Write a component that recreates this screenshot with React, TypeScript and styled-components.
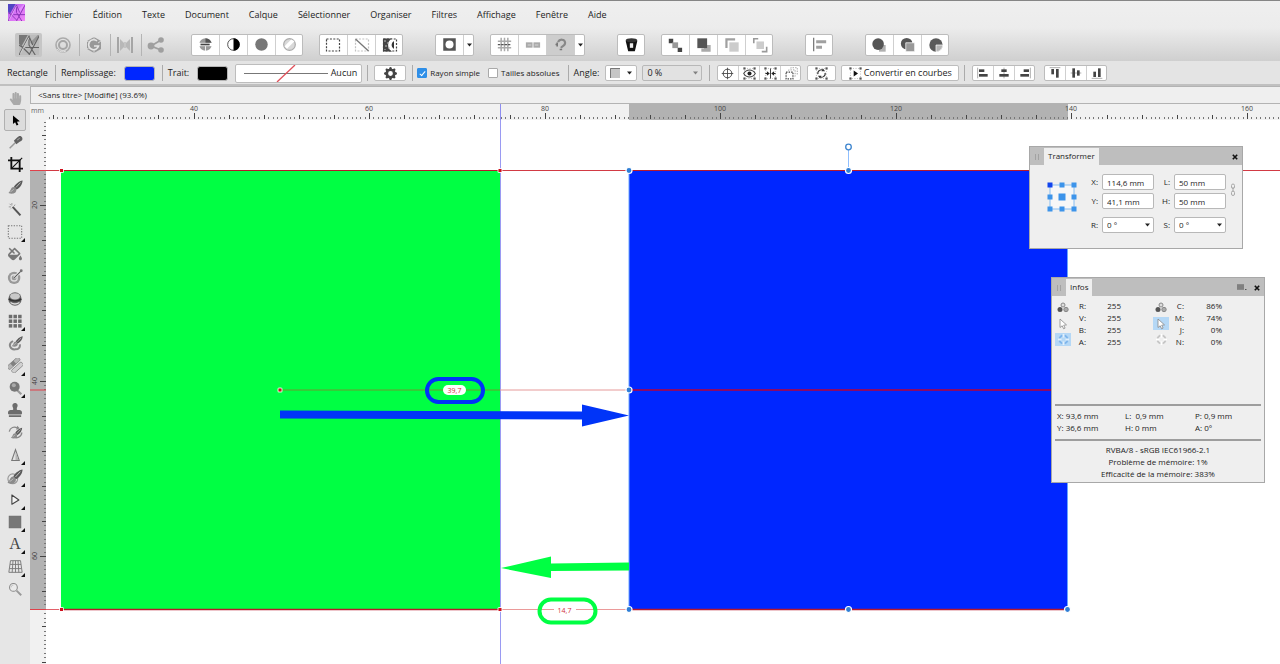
import React, { useEffect, useRef, useState } from "react";
import styled, { createGlobalStyle, css } from "styled-components";
import { FaFillDrip, FaHandPaper, FaStamp } from "react-icons/fa";
import { BsGearFill } from "react-icons/bs";

const GlobalStyle = createGlobalStyle`
  *, *::before, *::after { box-sizing: border-box; }
  body {
    margin: 0;
    background: #e6e6e6;
    color: #1c1c1c;
    font-family: "Open Sans", "Noto Sans", sans-serif;
    font-size: 9px;
    line-height: 12px;
  }
  button, input, select { font: inherit; color: inherit; margin: 0; padding: 0; }
  svg { display: block; flex: none; }
`;

/* ---------- shell ---------- */

const Window = styled.div`
  display: flex;
  flex-direction: column;
  min-height: 100vh;
  border-top: 1px solid #858585;
  overflow: hidden;
`;

const TopArea = styled.header`
  background: linear-gradient(#efefef, #ececec 45%, #cfcfcf);
`;

const MenuBar = styled.nav`
  display: flex;
  align-items: center;
  height: 27px;
  padding-left: 8px;
`;

const AppIcon = styled.span`
  margin: -4px 10px 0 0;
`;

const MenuItem = styled.button`
  border: 0;
  background: none;
  padding: 0 10px;
  white-space: nowrap;
`;

const MainToolbar = styled.div`
  display: flex;
  align-items: center;
  height: 33px;
  padding-left: 15px;
`;

const Personas = styled.div`
  display: flex;
  width: 176px;
`;

const PersonaButton = styled.button<{ $active?: boolean }>`
  display: grid;
  place-items: center;
  width: ${(p) => (p.$active ? 27 : 30)}px;
  margin-right: ${(p) => (p.$active ? 6 : 1)}px;
  height: 24px;
  border: 0;
  border-radius: 2px;
  background: ${(p) => (p.$active ? "#c6c6c6" : "none")};
  & + & { position: relative; }
  & + &::before {
    content: "";
    position: absolute;
    left: 0;
    top: 1px;
    width: 1px;
    height: 22px;
    background: #b4b4b4;
  }
`;

const ButtonGroup = styled.div<{ $gap?: number }>`
  display: flex;
  margin-left: ${(p) => p.$gap ?? 0}px;
  border: 1px solid #bcbcbc;
  border-radius: 2px;
  background: #fff;
`;

const GroupButton = styled.button<{ $small?: boolean; $pressed?: boolean; $narrow?: boolean }>`
  display: grid;
  place-items: center;
  flex: none;
  width: ${(p) => (p.$narrow ? 11 : p.$small ? 21 : 28)}px;
  height: ${(p) => (p.$small ? 14 : 20)}px;
  border: 0;
  background: ${(p) => (p.$pressed ? "#cdcdcd" : "none")};
  & + & { border-left: 1px solid #cfcfcf; }
  &:first-child { margin-left: -1px; }
  &:last-child { margin-right: -1px; }
`;

const ContextBar = styled.div`
  display: flex;
  align-items: center;
  height: 25px;
  padding: 1px 0 0 7px;
  background: #e4e4e4;
  border-bottom: 2px solid #c0c0c0;
  white-space: nowrap;
`;

const Divider = styled.span<{ $before?: number; $after?: number }>`
  flex: none;
  width: 1px;
  height: 16px;
  margin: 0 ${(p) => p.$after ?? 5}px 0 ${(p) => p.$before ?? 7}px;
  background: #ababab;
`;

const Swatch = styled.button<{ $color: string }>`
  width: 31px;
  height: 15px;
  margin-left: 8px;
  border: 1px solid #b5b5b5;
  border-radius: 3px;
  background: ${(p) => p.$color};
`;

const StrokeBox = styled.button`
  display: flex;
  align-items: center;
  justify-content: space-between;
  width: 127px;
  height: 19px;
  margin-left: 7px;
  padding: 0 4px 0 8px;
  border: 1px solid #bdbdbd;
  border-radius: 2px;
  background: #fff;
`;

const PlainButton = styled.button<{ $width: number; $left?: number }>`
  display: flex;
  align-items: center;
  justify-content: center;
  gap: 2px;
  flex: none;
  width: ${(p) => p.$width}px;
  height: 16px;
  margin-left: ${(p) => p.$left ?? 0}px;
  border: 1px solid #bdbdbd;
  border-radius: 2px;
  background: #fff;
`;

const CheckLabel = styled.label`
  display: flex;
  align-items: center;
  gap: 3px;
  margin-right: 8px;
  font-size: 8px;
`;

const Check = styled.input`
  appearance: none;
  display: grid;
  place-items: center;
  width: 10px;
  height: 10px;
  border: 1px solid #a9a9a9;
  border-radius: 1px;
  background: #fff;
  &:checked { background: #2f8fe8; border-color: #2f8fe8; }
  &:checked::after {
    content: "";
    width: 3px;
    height: 6px;
    margin-top: -1px;
    border: solid #fff;
    border-width: 0 1px 1px 0;
    transform: rotate(40deg);
  }
`;

const SelectWrap = styled.span<{ $width: number; $left?: number; $dim?: boolean }>`
  position: relative;
  display: inline-flex;
  flex: none;
  width: ${(p) => p.$width}px;
  height: 16px;
  margin-left: ${(p) => p.$left ?? 0}px;
  border: 1px solid #b8b8b8;
  border-radius: 2px;
  background: ${(p) => (p.$dim ? "#e2e2e2" : "#fff")};
  > svg {
    position: absolute;
    right: 3px;
    top: 5px;
    pointer-events: none;
    ${(p) => p.$dim && css`opacity: 0.5;`}
  }
`;

const Select = styled.select`
  appearance: none;
  width: 100%;
  height: 100%;
  padding: 0 4px;
  border: 0;
  background: none;
  line-height: 12px;
`;

const Body = styled.div`
  display: flex;
  flex: 1;
`;

const ToolColumn = styled.div`
  display: flex;
  flex-direction: column;
  justify-content: space-between;
  align-items: center;
  flex: none;
  width: 30px;
  height: 514px;
  padding-top: 1px;
`;

const ToolButton = styled.button<{ $active?: boolean }>`
  position: relative;
  display: grid;
  place-items: center;
  width: 22px;
  height: 22px;
  border: 1px solid ${(p) => (p.$active ? "#b0b0b0" : "transparent")};
  border-radius: 2px;
  background: ${(p) => (p.$active ? "#dcdcdc" : "none")};
`;

const Flyout = styled.span`
  position: absolute;
  right: 0;
  bottom: 0;
  border: solid transparent;
  border-width: 0 0 4px 4px;
  border-bottom-color: #111;
`;

const Workspace = styled.main`
  display: grid;
  grid-template: 18px 16px 1fr / 16px minmax(0, 1fr);
  flex: 1;
  min-width: 0;
`;

const DocumentTab = styled.div`
  grid-column: 1 / -1;
  padding: 2px 7px;
  border: 1px solid #b3b3b3;
  border-right: 0;
  background: #efefef;
  font-size: 8px;
`;

const Unit = styled.div`
  background: #f1f1f1;
  color: #666;
  font-size: 7px;
  line-height: 14px;
  padding-left: 1px;
`;

const RulerH = styled.svg`
  width: 100%;
  height: 16px;
  background: #f1f1f1;
`;

const RulerV = styled.svg`
  width: 16px;
  height: 100%;
  background: #f1f1f1;
`;

const Canvas = styled.section`
  position: relative;
  background: #fff;
  overflow: hidden;
`;

const Artwork = styled.svg`
  position: absolute;
  inset: 0;
  width: 100%;
  height: 100%;
`;

/* ---------- floating panels ---------- */

const Panel = styled.aside<{ $x: number; $y: number }>`
  position: absolute;
  left: ${(p) => p.$x}px;
  top: ${(p) => p.$y}px;
  width: 214px;
  border: 1px solid #a8a8a8;
  background: #efefef;
  font-size: 8px;
  line-height: 12px;
`;

const PanelHead = styled.div`
  display: flex;
  align-items: center;
  height: 18px;
  padding: 1px 4px 0 5px;
  background: #bebebe;
`;

const PanelTab = styled.h2`
  align-self: stretch;
  margin: 0 auto 0 5px;
  padding: 2px 4px;
  background: #efefef;
  font-size: 8px;
  font-weight: 400;
`;

const IconButton = styled.button`
  border: 0;
  background: none;
  margin-left: 7px;
`;

const TransformBody = styled.div`
  display: flex;
  align-items: flex-start;
  padding: 9px 6px 15px 17px;
`;

const AnchorBox = styled.div`
  margin-top: 8px;
  margin-right: 10px;
`;

const Fields = styled.div`
  display: grid;
  grid-template-columns: 11px 52px 12px 52px;
  gap: 3px 4px;
  align-items: center;
`;

const FieldLabel = styled.label`
  text-align: right;
  justify-self: end;
`;

const TextField = styled.input`
  width: 100%;
  height: 16px;
  padding: 0 4px;
  border: 1px solid #b8b8b8;
  border-radius: 2px;
  background: #fff;
`;

const FieldGap = styled.span`
  grid-column: 1 / -1;
  height: 2px;
`;

const LinkIcon = styled.div`
  margin: 9px 0 0 4px;
`;

const InfoBody = styled.div`
  padding: 4px 3px 2px;
`;

const InfoColumns = styled.div`
  display: flex;
  height: 104px;
`;

const InfoModes = styled.div<{ $left?: number }>`
  display: flex;
  flex-direction: column;
  gap: 3px;
  margin: 1px 0 0 ${(p) => p.$left ?? 0}px;
`;

const ModeButton = styled.button<{ $active?: boolean }>`
  display: grid;
  place-items: center;
  width: 16px;
  height: 13px;
  border: 0;
  background: ${(p) => (p.$active ? "#b5d8f6" : "none")};
`;

const Values = styled.table<{ $width: number }>`
  align-self: flex-start;
  width: ${(p) => p.$width}px;
  border-collapse: collapse;
  text-align: right;
  th, td { padding: 0; font-weight: 400; }
  th { width: 15px; text-align: right; }
`;

const Coordinates = styled.div`
  display: grid;
  grid-template-columns: 68px 70px 1fr;
  padding: 4px 2px 5px;
  border-top: 2px solid #9d9d9d;
  border-bottom: 2px solid #9d9d9d;
  white-space: pre;
`;

const Status = styled.p`
  margin: 3px 0 0;
  text-align: center;
`;

/* ---------- icons ---------- */

const Caret = () => (
  <svg width="5" height="4" viewBox="0 0 5 4"><path d="M0 0.5h5L2.5 3.5z" fill="#222" /></svg>
);

const Icon = ({ s = 18, children }: { s?: number; children: React.ReactNode }) => (
  <svg width={s} height={s} viewBox="0 0 18 18" fill="none" stroke="none">{children}</svg>
);

const anchors = [0, 1, 2].flatMap((r) => [0, 1, 2].map((c) => [c, r])).filter(([c, r]) => c !== 1 || r !== 1);

const CornerDots = () => (
  <>
    <rect x="2" y="2" width="14" height="14" stroke="#aaa" strokeWidth="1" strokeDasharray="1.5 2" />
    {[[2, 2], [16, 2], [2, 16], [16, 16]].map(([x, y]) => (
      <rect key={`${x}-${y}`} x={x - 1.5} y={y - 1.5} width="3" height="3" fill="#555" />
    ))}
  </>
);

const Logo = ({ size, mono }: { size: number; mono?: boolean }) => (
  <svg width={size} height={size} viewBox="0 0 16 16">
    <defs>
      <linearGradient id="brand" x1="0" y1="0" x2="1" y2="1">
        <stop offset="0" stopColor="#8a58e6" />
        <stop offset="0.4" stopColor="#d070f4" />
        <stop offset="1" stopColor="#f285f6" />
      </linearGradient>
    </defs>
    <rect width="16" height="16" fill={mono ? "#bcbcbc" : "url(#brand)"} />
    <path d="M0 0h7L2 9 0 7z" fill={mono ? "#777" : "#5145c4"} />
    <path d="M9 6l6-6h1v1l-5 7z" fill={mono ? "#959595" : "#e58cff"} />
    <path d="M0 16L8 1l3 7M2 9l6 6M5 10h11M8 16l8-15M8 1v7l5 8M0 8l3 2" stroke={mono ? "#636363" : "#8a35b8"} strokeWidth="0.9" fill="none" />
    <path d="M1 15L8 2" stroke={mono ? "#e2e2e2" : "#f7c8ff"} strokeWidth="0.6" />
  </svg>
);

type Btn = [string, React.ReactNode];

const personas: Btn[] = [
  ["Fluidité", <Icon key="a"><circle cx="9" cy="9" r="7" stroke="#aaa" strokeWidth="1.6" /><circle cx="9" cy="9" r="4" stroke="#a5a5a5" strokeWidth="2" /><path d="M3 13a7 7 0 0 0 9 2" stroke="#ddd" /></Icon>],
  ["Développer", <Icon key="b"><path d="M9 1l7 4v8l-7 4-7-4V5z" fill="#999" /><path d="M12 5a5 5 0 1 0 1.500 5H9" stroke="#e6e6e6" strokeWidth="1.600" /><path d="M9 1v3M16 5l-3 2M9 17v-3M2 13l3-2M2 5l3 2" stroke="#ddd" strokeWidth="0.9" /></Icon>],
  ["Mappage tonal", <Icon key="c"><path d="M2 1v16M16 1v16" stroke="#a5a5a5" strokeWidth="2" /><path d="M4 3l4 4v4l-4 4zM14 3l-4 4v4l4 4z" fill="#b8b8b8" /><path d="M9 6v6" stroke="#aaa" strokeWidth="1" /></Icon>],
  ["Exporter", <Icon key="d"><path d="M14 4L4 10l10 4" stroke="#9f9f9f" strokeWidth="1.8" /><circle cx="4" cy="10" r="3.4" fill="#9f9f9f" /><circle cx="14" cy="4" r="2.8" fill="#9f9f9f" /><circle cx="14" cy="14" r="2.8" fill="#9f9f9f" /></Icon>],
];

const MarqueeBox = ({ color = "#444" }: { color?: string }) => (
  <rect x="2.5" y="3" width="13" height="12" stroke={color} strokeWidth="1.2" strokeDasharray="2 1.4" />
);

const adjustments: Btn[] = [
  ["Niveaux automatiques", <Icon key="1" s={15}><circle cx="9" cy="9" r="7.500" fill="#999" /><path d="M9 1.500a7.500 7.500 0 0 1 7.500 7.500H9z" fill="#555" /><rect x="1" y="7" width="16" height="4" fill="#fff" /><rect x="3" y="8" width="11" height="2" fill="#444" /><path d="M9 11v6" stroke="#fff" /></Icon>],
  ["Contraste automatique", <Icon key="2" s={15}><circle cx="9" cy="9" r="7" stroke="#333" fill="#fff" /><path d="M9 1.500a7.500 7.500 0 0 1 0 15z" fill="#000" /></Icon>],
  ["Couleurs automatiques", <Icon key="3" s={15}><circle cx="9" cy="9" r="7.500" fill="#777" /></Icon>],
  ["Balance des blancs", <Icon key="4" s={15}><circle cx="9" cy="9" r="7" stroke="#aaa" strokeWidth="1.4" fill="#d9d9d9" /><path d="M3 11l8-8 4 2-9 9z" fill="#fff" /></Icon>],
];

const selections: Btn[] = [
  ["Tout sélectionner", <Icon key="1" s={18}><MarqueeBox /></Icon>],
  ["Désélectionner", <Icon key="2" s={18}><MarqueeBox color="#c2c2c2" /><path d="M2.500 3l13 12" stroke="#777" strokeWidth="1.3" /></Icon>],
  ["Inverser la sélection", <Icon key="3" s={18}><MarqueeBox /><path d="M2 2.500h9.500a7 7 0 0 0 0 13H2z" fill="#444" /><path d="M13 5a4.500 4.500 0 0 0 0 8z" fill="#333" /><path d="M4 4v2M7 6v2M5 9v2M8 11v2M4 13v1" stroke="#bbb" /></Icon>],
];

const snapping: Btn[] = [
  ["Grille", <Icon key="1" s={15}><path d="M1 5h16M1 13h16M5 1v16M9 1v16M13 1v16" stroke="#aaa" strokeWidth="1.800" /><path d="M1 9h16" stroke="#555" strokeWidth="1.500" strokeDasharray="3 1" /></Icon>],
  ["Aligner sur les pixels", <Icon key="2" s={16}><rect x="1" y="6" width="7.500" height="6" fill="#aaa" /><rect x="9.500" y="6" width="7.500" height="6" fill="#aaa" /><path d="M3 9h4M11 9h4" stroke="#ddd" /></Icon>],
];

const orders: Btn[] = [
  ["Premier plan", <Icon key="1" s={16}><path d="M2 2h5v5H2zM12 12h5v5h-5z" fill="#444" /><path d="M6 6h6.500v6.500H6z" fill="#999" /><path d="M10 3h3v3h-3zM4 10h3v3H4z" fill="#bbb" opacity="0" /></Icon>],
  ["Avancer", <Icon key="2" s={16}><path d="M9 9h7.500v7.500H6V13h3z" fill="#aaa" /><path d="M1.500 1.500h11v11h-11z" fill="#555" /></Icon>],
  ["Reculer", <Icon key="3" s={16}><path d="M1.500 1.500h11V4H4v8.500H1.500z" fill="#a0a0a0" /><path d="M6 6h10.500v10.500H6z" fill="#ccc" /></Icon>],
  ["Arrière-plan", <Icon key="4" s={16}><path d="M2 7V2h5M11 16.500h5.500V11" stroke="#999" strokeWidth="1.800" /><path d="M5 5h8.500v8.500H5z" fill="#ccc" /></Icon>],
];

const booleans: Btn[] = [
  ["Ajouter", <Icon key="1" s={16}><path d="M9 9h7.500v7.500H9z" fill="#b0b0b0" /><circle cx="8" cy="8" r="6.500" fill="#555" /></Icon>],
  ["Soustraire", <Icon key="2" s={16}><circle cx="7.500" cy="7.500" r="6.500" fill="#555" /><path d="M6.500 6.500h10v10h-10z" fill="#999" stroke="#fff" strokeWidth="0.8" /></Icon>],
  ["Intersection", <Icon key="3" s={16}><circle cx="9" cy="9" r="7.500" fill="#5a5a5a" /><path d="M9 9h7.500c0 4-3.500 7.500-7.500 7.500z" fill="#b5b5b5" stroke="#fff" strokeWidth="0.8" /></Icon>],
];

const pivots: Btn[] = [
  ["Afficher l'origine", <Icon key="1" s={13}><circle cx="9" cy="9" r="6" stroke="#444" strokeWidth="1.3" /><path d="M9 1v16M1 9h16" stroke="#444" strokeWidth="1.2" /></Icon>],
  ["Masquer la sélection", <Icon key="2" s={13}><CornerDots /><path d="M1 9c4-6.500 12-6.500 16 0-4 6.500-12 6.500-16 0z" fill="#fff" stroke="#444" strokeWidth="1.5" /><circle cx="9" cy="9" r="2.800" fill="#222" /></Icon>],
  ["Symétrie", <Icon key="3" s={13}><CornerDots /><path d="M9 2v14" stroke="#444" strokeWidth="1.4" /><path d="M2 9h3M13 9h3" stroke="#222" strokeWidth="1.5" /><path d="M4 6l4 3-4 3zM14 6l-4 3 4 3z" fill="#222" /></Icon>],
  ["Transformer séparément", <Icon key="4" s={13}><rect x="1.500" y="7" width="9.500" height="9.500" stroke="#444" strokeWidth="1.6" strokeDasharray="2 1.5" /><path d="M5 5V4h9v9h-1M8 2V1h9v9h-1" stroke="#999" strokeWidth="1.2" strokeDasharray="2 1.5" /></Icon>],
];

const AlignIcon = ({ rows, axis, vertical }: { rows: [number, number][]; axis: number; vertical?: boolean }) => (
  <Icon s={12}>
    <g transform={vertical ? "matrix(0 1 1 0 0 0)" : undefined}>
      <path d={`M${axis} 1v16`} stroke="#999" strokeWidth="1.2" />
      {rows.map(([x, w], i) => (
        <rect key={i} x={x} y={i === 0 ? 3.5 : 10.5} width={w} height="4" fill="#444" />
      ))}
    </g>
  </Icon>
);

const alignH: Btn[] = [
  ["Aligner à gauche", <AlignIcon key="1" axis={1} rows={[[3, 8], [3, 13]]} />],
  ["Centrer horizontalement", <AlignIcon key="2" axis={9} rows={[[5, 8], [2, 14]]} />],
  ["Aligner à droite", <AlignIcon key="3" axis={17} rows={[[7, 8], [2, 13]]} />],
];
const alignV: Btn[] = [
  ["Aligner en haut", <AlignIcon key="1" vertical axis={1} rows={[[3, 8], [3, 13]]} />],
  ["Centrer verticalement", <AlignIcon key="2" vertical axis={9} rows={[[2, 14], [5, 8]]} />],
  ["Aligner en bas", <AlignIcon key="3" vertical axis={17} rows={[[7, 8], [2, 13]]} />],
];

const Brush = () => (
  <g>
    <path d="M17.500 0.500c-4 0.500-9 4.500-10.500 8l3 3c4.500-2 7.500-7 7.500-11z" fill="#5a5a5a" />
    <path d="M7 8.500c-4 0-3 4.500-6.500 7 4 2 10 1 9.500-4z" fill="#8b8b8b" />
    <path d="M15 3l-5.500 6" stroke="#ccc" />
    <path d="M3 14c2-1 3-2 4-3" stroke="#c9c9c9" />
  </g>
);

type Tool = { name: string; icon: React.ReactNode; more?: boolean };
const tools: Tool[] = [
  { name: "Vue", icon: <FaHandPaper size={13} color="#a9a9a9" /> },
  { name: "Déplacement", icon: <Icon s={13}><path d="M5.500 2v12l3-2.500 2 4.500 2.500-1-2-4.300 4-.7z" fill="#000" /></Icon> },
  { name: "Pipette", icon: <Icon s={15}><path d="M2 16l7-7" stroke="#999" strokeWidth="1.800" /><path d="M7 7l4-4c2-2.500 5-2.500 6 0s0 4-3 5l-4 3z" fill="#606060" /><path d="M11 6l3-2" stroke="#bbb" /></Icon> },
  { name: "Recadrage", icon: <Icon s={15}><path d="M4 0v14h14M0 4h14v14" stroke="#111" strokeWidth="2.200" /><path d="M4 14L17 1" stroke="#111" strokeWidth="1.3" /></Icon> },
  { name: "Pinceau de sélection", icon: <Icon s={15}><Brush /></Icon> },
  { name: "Baguette magique", icon: <Icon s={14}><path d="M6 5l10 11" stroke="#555" strokeWidth="2.600" /><path d="M5 0v3M1 5H4M2 1l2 2M9 2L8 4M3 8l1-1" stroke="#999" strokeWidth="1.2" /></Icon> },
  { name: "Rectangle de sélection", more: true, icon: <Icon s={16}><rect x="1.500" y="2" width="15" height="14" stroke="#777" strokeWidth="1.2" strokeDasharray="1.5 1.5" /></Icon> },
  { name: "Remplissage", icon: <FaFillDrip size={14} color="#777" /> },
  { name: "Dégradé", icon: <Icon s={16}><circle cx="8" cy="10" r="7" fill="#999" /><circle cx="8" cy="10" r="3.500" stroke="#ddd" strokeWidth="1.5" /><path d="M8 10l8-8" stroke="#eee" strokeWidth="3" /><path d="M8 10l8-8" stroke="#555" strokeWidth="1.2" /><circle cx="16" cy="2" r="1.600" fill="#777" /></Icon> },
  { name: "Éponge", icon: <Icon s={16}><circle cx="9" cy="9" r="7.500" fill="#666" /><ellipse cx="9" cy="6" rx="5.500" ry="3.500" fill="#c9c9c9" /><path d="M2 9c4 3 10 3 14 0" stroke="#333" strokeWidth="1.800" /><path d="M4 13c3 2 7 2 10 0" stroke="#ddd" strokeWidth="1.5" /></Icon> },
  { name: "Maillage", more: true, icon: <Icon s={14}>{[1, 7, 13].map((x) => [1, 7, 13].map((y) => <rect key={`${x}-${y}`} x={x} y={y} width="4.500" height="4.500" fill="#6c6c6c" />))}</Icon> },
  { name: "Pinceau de retouche", icon: <Icon s={15}><path d="M6 6c-7 4-3 11 3 10 4 0 6-3 5-6" stroke="#888" strokeWidth="2.400" /><g transform="translate(4 0) scale(0.78)"><Brush /></g></Icon> },
  { name: "Correcteur", more: true, icon: <Icon s={15}><g transform="rotate(-42 9 9)"><rect x="0" y="3" width="18" height="5" rx="1.500" fill="#b5b5b5" stroke="#8a8a8a" /><rect x="1" y="10" width="16" height="5" rx="1.500" fill="#d0d0d0" stroke="#8a8a8a" /><rect x="6" y="3" width="5" height="5" fill="#808080" /></g></Icon> },
  { name: "Densité", more: true, icon: <Icon s={15}><path d="M11 11l5 5" stroke="#999" strokeWidth="2.600" /><circle cx="8" cy="7" r="6" fill="#777" /><circle cx="7" cy="5" r="2.400" fill="#aaa" /></Icon> },
  { name: "Clonage", icon: <FaStamp size={14} color="#6c6c6c" /> },
  { name: "Annulation", icon: <Icon s={15}><path d="M1.500 8c1-5 6-7 10-4M16.500 9c0 5-6 8-11 5" stroke="#888" strokeWidth="1.600" /><path d="M10 6l4-2-3-3z" fill="#888" /><g transform="translate(3 3) scale(0.8)"><Brush /></g></Icon> },
  { name: "Netteté", more: true, icon: <Icon s={15}><path d="M9 2l4.500 13h-9z" fill="#e2e2e2" stroke="#777" strokeWidth="1.3" /><path d="M9 4l3.500 10.500H9z" fill="#b5b5b5" /></Icon> },
  { name: "Pinceau mélangeur", more: true, icon: <Icon s={16}><circle cx="6.500" cy="11" r="5.500" stroke="#999" strokeWidth="1.3" /><Brush /></Icon> },
  { name: "Nœud", more: true, icon: <Icon s={14}><path d="M5 2.500v12l9-5.500z" fill="#f5f5f5" stroke="#444" strokeWidth="1.4" strokeLinejoin="round" /></Icon> },
  { name: "Rectangle", more: true, icon: <Icon s={14}><rect x="1.500" y="1.500" width="15" height="15" fill="#777" stroke="#666" /></Icon> },
  { name: "Texte artistique", more: true, icon: <Icon s={16}><text x="9" y="15" textAnchor="middle" fontFamily="Liberation Serif, serif" fontSize="18" fill="#444">A</text></Icon> },
  { name: "Déformation", more: true, icon: <Icon s={15}><path d="M3 2h12l2 14H1zM2.500 6.500h13M2 11.500h14M6 2l-1 14M9 2v14M12 2l1 14" stroke="#777" strokeWidth="1.1" /></Icon> },
  { name: "Zoom", icon: <Icon s={14}><path d="M11 11l6 6" stroke="#999" strokeWidth="2.400" /><circle cx="7" cy="7" r="5" fill="#eaeaea" stroke="#888" strokeWidth="1.3" /><path d="M4 7a3 3 0 0 1 3-3" stroke="#bbb" /></Icon> },
];

const menus = ["Fichier", "Édition", "Texte", "Document", "Calque", "Sélectionner", "Organiser", "Filtres", "Affichage", "Fenêtre", "Aide"];

const Group = ({ items, gap, small }: { items: Btn[]; gap?: number; small?: boolean }) => (
  <ButtonGroup $gap={gap}>
    {items.map(([name, icon]) => (
      <GroupButton key={name} $small={small} aria-label={name}>{icon}</GroupButton>
    ))}
  </ButtonGroup>
);

/* ---------- rulers ---------- */

const MM = 8.78;

/* Length of the ruler on screen, so that ticks and labels stop at its end. */
function useLength(axis: "width" | "height") {
  const ref = useRef<SVGSVGElement>(null);
  const [length, setLength] = useState(0);
  useEffect(() => {
    const el = ref.current;
    if (!el) return;
    const measure = () => setLength(el.getBoundingClientRect()[axis]);
    measure();
    const observer = new ResizeObserver(measure);
    observer.observe(el);
    return () => observer.disconnect();
  }, [axis]);
  return [ref, length] as const;
}

function ticks(origin: number, length: number) {
  const out: { pos: number; size: number }[] = [];
  for (let i = 0; ; i++) {
    const pos = Math.round(origin + (i * MM) / 2);
    if (pos > length) return out;
    if (pos >= 2) out.push({ pos, size: i % 40 === 0 ? 6 : i % 8 === 0 ? 4 : 2 });
  }
}

function labels(origin: number, length: number) {
  const out: { pos: number; value: number }[] = [];
  for (let value = 20; ; value += 20) {
    const pos = Math.round(origin + value * MM);
    if (pos > length - 8) return out;
    if (pos > 8) out.push({ pos, value });
  }
}

const tickColor = (size: number) => (size === 2 ? "#777" : "#444");

const HorizontalRuler = () => {
  const [ref, length] = useLength("width");
  const origin = 147.5 - 40 * MM;
  return (
    <RulerH ref={ref}>
      <rect x="583" width="439" height="16" fill="#b2b2b2" />
      {ticks(origin, length).map(({ pos, size }) => (
        <rect key={pos} x={pos} y={15 - size} width="1" height={size} fill={tickColor(size)} />
      ))}
      {labels(origin, length).map(({ pos, value }) => (
        <text key={value} x={pos} y="7" textAnchor="middle" fontSize="7" fill="#444">{value}</text>
      ))}
      <path d="M454.5 0v16" stroke="#8d8df0" />
    </RulerH>
  );
};

const VerticalRuler = () => {
  const [ref, length] = useLength("height");
  const origin = 85 - 20 * MM;
  return (
    <RulerV ref={ref}>
      <rect y="51" width="16" height="439" fill="#b2b2b2" />
      {ticks(origin, length).map(({ pos, size }) => (
        <rect key={pos} x={16 - size} y={pos} width={size} height="1" fill={tickColor(size)} />
      ))}
      {labels(origin, length).map(({ pos, value }) => (
        <text key={value} transform={`translate(7 ${pos}) rotate(-90)`} textAnchor="middle" fontSize="7" fill="#444">{value}</text>
      ))}
      <path d="M0 50.5h16M0 270h16M0 489.5h16" stroke="#e0404a" />
    </RulerV>
  );
};

/* ---------- canvas artwork ---------- */

const Handle = ({ x, y }: { x: number; y: number }) => (
  <circle cx={x} cy={y} r="3" fill="#2f7fd6" stroke="#fff" strokeWidth="1.2" />
);
const SnapPoint = ({ x, y }: { x: number; y: number }) => (
  <g>
    <rect x={x - 2.5} y={y - 2.5} width="5" height="5" rx="1.5" fill="#fff" opacity="0.8" />
    <rect x={x - 1.5} y={y - 1.5} width="3" height="3" fill="#d0101c" />
  </g>
);

const Scene = () => (
  <Artwork>
    <path d="M454.5 0v4000" stroke="#9a9af2" />
    <rect x="15" y="51" width="439" height="438" fill="#00ff43" />
    <rect x="583" y="51" width="438" height="438" fill="#0026ff" />
    <path d="M583 51v438M1021.5 51v438" stroke="#6aa5ff" />
    <path d="M0 50.5h4000" stroke="#d23a44" />
    <path d="M0 489.5h16" stroke="#e2606a" />
    <path d="M16 489.5h438M583 489.5h438" stroke="#b8182c" strokeWidth="1.5" />
    <path d="M454 489.5h129" stroke="#eb9a9a" />
    <path d="M234 270h220" stroke="#6c9a30" />
    <path d="M454 270h129" stroke="#e69a9a" />
    <path d="M583 270h438" stroke="#b80038" strokeWidth="1.5" />
    <path d="M583 50.5h438M16 50.5h438" stroke="#b8182c" />

    <path d="M234 290.5l302 1v-7l47 11-47 11v-7l-302-1z" fill="#0034f8" />
    <path d="M583 442.5l-78 1v-7l-50 11.500 50 10v-7l78-.5z" fill="#00ff43" />

    <rect x="381" y="259" width="56" height="23" rx="11.5" fill="none" stroke="#0034f8" strokeWidth="4" />
    <rect x="397" y="265" width="23" height="10" rx="5" fill="#fff" />
    <text x="408.5" y="272.5" textAnchor="middle" fontSize="7" fill="#d0303a">39,7</text>

    <rect x="508" y="484" width="22" height="10" fill="#fff" />
    <rect x="493.5" y="479.5" width="56" height="23" rx="11.5" fill="none" stroke="#00ff43" strokeWidth="4" />
    <text x="518.5" y="492.5" textAnchor="middle" fontSize="7" fill="#d0303a">14,7</text>

    <path d="M802.5 30v20" stroke="#8fbfff" />
    <circle cx="802.5" cy="27" r="2.800" fill="#fff" stroke="#3f86cf" strokeWidth="1.3" />
    {[[583, 50.5], [802.5, 50.5], [583, 270], [583, 489.5], [802.5, 489.5], [1021.5, 489.5]].map(([x, y]) => (
      <Handle key={`${x}-${y}`} x={x} y={y} />
    ))}
    {[[15.5, 50.5], [454, 50.5], [234, 270], [15.5, 489.5], [454, 489.5]].map(([x, y]) => (
      <SnapPoint key={`${x}-${y}`} x={x} y={y} />
    ))}
  </Artwork>
);

/* ---------- panels ---------- */

const Grip = () => <svg width="4" height="8"><path d="M0.5 1v6M3.5 1v6" stroke="#a2a2a2" /></svg>;
const CloseButton = () => (
  <IconButton aria-label="Fermer">
    <svg width="6" height="6" viewBox="0 0 6 6"><path d="M0.8 0.8l4.400 4.400M5.200 0.800L0.800 5.200" stroke="#111" strokeWidth="1.6" /></svg>
  </IconButton>
);

const TransformPanel = () => (
  <Panel $x={983} $y={26}>
    <PanelHead><Grip /><PanelTab>Transformer</PanelTab><CloseButton /></PanelHead>
    <TransformBody>
      <AnchorBox>
        <svg width="30" height="30" viewBox="0 0 30 30">
          <rect x="3" y="3" width="24" height="24" fill="#f7f7f7" stroke="#86bdf2" />
          <rect x="11.5" y="11.5" width="7" height="7" fill="#3d94ea" />
          {anchors.map(([c, r]) => (
            <rect key={`${c}-${r}`} x={0.5 + c * 12} y={0.5 + r * 12} width="5" height="5" fill={c + r === 0 ? "#1144ee" : "#3d94ea"} />
          ))}
        </svg>
      </AnchorBox>
      <Fields>
        <FieldLabel htmlFor="fx">X:</FieldLabel><TextField id="fx" defaultValue="114,6 mm" />
        <FieldLabel htmlFor="fl">L:</FieldLabel><TextField id="fl" defaultValue="50 mm" />
        <FieldLabel htmlFor="fy">Y:</FieldLabel><TextField id="fy" defaultValue="41,1 mm" />
        <FieldLabel htmlFor="fh">H:</FieldLabel><TextField id="fh" defaultValue="50 mm" />
        <FieldGap />
        <FieldLabel htmlFor="fr">R:</FieldLabel>
        <SelectWrap $width={52}><Select id="fr"><option>0 °</option></Select><Caret /></SelectWrap>
        <FieldLabel htmlFor="fs">S:</FieldLabel>
        <SelectWrap $width={52}><Select id="fs"><option>0 °</option></Select><Caret /></SelectWrap>
      </Fields>
      <LinkIcon>
        <svg width="6" height="14" viewBox="0 0 6 14" fill="none" stroke="#aaa"><rect x="1.5" y="1" width="3" height="4.5" rx="1.5" /><rect x="1.5" y="8" width="3" height="4.5" rx="1.5" /><path d="M3 4v5" /></svg>
      </LinkIcon>
    </TransformBody>
  </Panel>
);

const Modes = ({ left, active }: { left?: number; active: "cursor" | "target" }) => (
  <InfoModes $left={left}>
    <ModeButton aria-label="Modèle colorimétrique">
      <svg width="12" height="11" viewBox="0 0 12 11"><circle cx="6" cy="3" r="2" fill="#ddd" stroke="#888" /><circle cx="3" cy="7.5" r="2.500" fill="#555" /><circle cx="9" cy="7.5" r="2.200" fill="#aaa" stroke="#888" /></svg>
    </ModeButton>
    <ModeButton aria-label="Curseur" $active={active === "cursor"}>
      <svg width="10" height="12" viewBox="0 0 10 12"><path d="M2 1v8.500l2.200-1.700 1.400 3 1.500-.7-1.400-2.900 2.800-.3z" fill="#fff" stroke="#888" strokeWidth="0.8" /></svg>
    </ModeButton>
    <ModeButton aria-label="Cible" $active={active === "target"}>
      <svg width="13" height="11" viewBox="0 0 13 11" fill="none"><circle cx="6.5" cy="5.5" r="4" stroke={active === "target" ? "#7fb6ec" : "#c6c6c6"} strokeWidth="2" /><path d="M6.500 0v3.500M6.500 7.500v3.500M1 5.500h3.500M8.500 5.500h3.500" stroke={active === "target" ? "#e2f0fc" : "#fff"} strokeWidth="2" /></svg>
    </ModeButton>
  </InfoModes>
);

const ValueTable = ({ rows, width }: { rows: [string, string][]; width: number }) => (
  <Values $width={width}>
    <tbody>{rows.map(([k, v]) => <tr key={k}><th scope="row">{k}:</th><td>{v}</td></tr>)}</tbody>
  </Values>
);

const InfoPanel = () => (
  <Panel $x={1005} $y={157}>
    <PanelHead>
      <Grip /><PanelTab>Infos</PanelTab>
      <IconButton aria-label="Options"><svg width="10" height="7"><rect width="7" height="6" fill="#8a8a8a" /><path d="M0 2h7M0 4h7" stroke="#777" /><path d="M8 5.500h1.500" stroke="#555" /></svg></IconButton>
      <CloseButton />
    </PanelHead>
    <InfoBody>
      <InfoColumns>
        <Modes active="target" />
        <ValueTable width={50} rows={[["R", "255"], ["V", "255"], ["B", "255"], ["A", "255"]]} />
        <Modes left={32} active="cursor" />
        <ValueTable width={53} rows={[["C", "86%"], ["M", "74%"], ["J", "0%"], ["N", "0%"]]} />
      </InfoColumns>
      <Coordinates>
        <span>X: 93,6 mm</span><span>L:  0,9 mm</span><span>P: 0,9 mm</span>
        <span>Y: 36,6 mm</span><span>H: 0 mm</span><span>A: 0°</span>
      </Coordinates>
      <Status>RVBA/8 - sRGB IEC61966-2.1<br />Problème de mémoire: 1%<br />Efficacité de la mémoire: 383%</Status>
    </InfoBody>
  </Panel>
);

/* ---------- app ---------- */

export default function App() {
  return (
    <Window>
      <GlobalStyle />
      <TopArea>
        <MenuBar>
          <AppIcon><Logo size={17} /></AppIcon>
          {menus.map((m) => <MenuItem key={m}>{m}</MenuItem>)}
        </MenuBar>
        <MainToolbar>
          <Personas>
            <PersonaButton $active aria-label="Photo"><Logo size={20} mono /></PersonaButton>
            {personas.map(([name, icon]) => <PersonaButton key={name} aria-label={name}>{icon}</PersonaButton>)}
          </Personas>
          <Group items={adjustments} />
          <Group items={selections} gap={16} />
          <ButtonGroup $gap={32}>
            <GroupButton aria-label="Masque rapide"><Icon s={15}><rect x="1.5" y="1.5" width="15" height="15" fill="#555" /><circle cx="9" cy="9" r="4.800" fill="#fff" /></Icon></GroupButton>
            <GroupButton $narrow aria-label="Options de masque"><Caret /></GroupButton>
          </ButtonGroup>
          <ButtonGroup $gap={16}>
            {snapping.map(([name, icon]) => <GroupButton key={name} aria-label={name}>{icon}</GroupButton>)}
            <GroupButton $pressed aria-label="Magnétisme">
              <Icon s={15}><path d="M6 6c2-4 8-3.500 8.500 0.500s-3 4-5 6.500" stroke="#888" strokeWidth="2.600" /><path d="M3 9h3M5 6.500v5M8 15h3" stroke="#777" strokeWidth="2" /></Icon>
            </GroupButton>
            <GroupButton $narrow aria-label="Options de magnétisme"><Caret /></GroupButton>
          </ButtonGroup>
          <ButtonGroup $gap={32}>
            <GroupButton aria-label="Assistant"><Icon s={15}><path d="M2 4.500L5 17h8l3-12.500z" fill="#111" /><ellipse cx="9" cy="4" rx="7" ry="2.500" fill="#333" /><rect x="7" y="7.500" width="4" height="5.500" fill="#eee" /></Icon></GroupButton>
          </ButtonGroup>
          <Group items={orders} gap={16} />
          <ButtonGroup $gap={32}>
            <GroupButton aria-label="Alignement"><Icon s={15}><path d="M2 1v16" stroke="#777" strokeWidth="1.5" /><path d="M5 4h12v3.500H5zM5 10.500h7V14H5z" fill="#a0a0a0" /></Icon></GroupButton>
          </ButtonGroup>
          <Group items={booleans} gap={32} />
        </MainToolbar>
      </TopArea>

      <ContextBar>
        <span>Rectangle</span>
        <Divider />
        <span>Remplissage:</span><Swatch $color="#0026ff" aria-label="Remplissage" />
        <Divider />
        <span>Trait:</span><Swatch $color="#000" aria-label="Trait" />
        <StrokeBox>
          <svg width="84" height="17" viewBox="0 0 84 17"><path d="M0 8.500h84" stroke="#777" /><path d="M33 17L51 0" stroke="#e0505a" strokeWidth="1.3" /></svg>
          Aucun
        </StrokeBox>
        <Divider $before={5} $after={6} />
        <PlainButton $width={32} aria-label="Options de contour"><BsGearFill size={13} color="#444" /></PlainButton>
        <Divider $before={6} $after={4} />
        <CheckLabel><Check type="checkbox" defaultChecked />Rayon simple</CheckLabel>
        <CheckLabel><Check type="checkbox" />Tailles absolues</CheckLabel>
        <Divider $before={0} />
        <span>Angle:</span>
        <PlainButton $width={32} $left={6} aria-label="Type d'angle">
          <svg width="25" height="12" viewBox="0 0 25 12"><rect x="1" y="1" width="10" height="10" fill="#c6c6c6" /><path d="M1.500 11V1.500H11" stroke="#777" fill="none" /><path d="M18 4.500h5L20.500 7.500z" fill="#222" /></svg>
        </PlainButton>
        <SelectWrap $width={60} $left={5} $dim><Select aria-label="Rayon"><option>0 %</option></Select><Caret /></SelectWrap>
        <Divider $after={7} />
        <Group items={pivots} small />
        <PlainButton $width={29} $left={6} aria-label="Réinitialiser">
          <Icon s={13}><CornerDots /><circle cx="9" cy="9" r="6" fill="#fff" /><path d="M4 10a5 5 0 0 1 8-5M14 8a5 5 0 0 1-8 5" stroke="#333" strokeWidth="1.6" /><path d="M11 2l3 4h-5zM7 16l-3-4h5z" fill="#333" /></Icon>
        </PlainButton>
        <PlainButton $width={118} $left={5}>
          <Icon s={13}><CornerDots /><path d="M6.500 5l6 4-6 4z" fill="#111" /></Icon>Convertir en courbes
        </PlainButton>
        <Divider $before={5} $after={7} />
        <Group items={alignH} small />
        <Group items={alignV} gap={9} small />
      </ContextBar>

      <Body>
        <ToolColumn role="toolbar" aria-label="Outils">
          {tools.map((t, i) => (
            <ToolButton key={t.name} aria-label={t.name} $active={i === 1}>
              {t.icon}
              {t.more && <Flyout />}
            </ToolButton>
          ))}
        </ToolColumn>
        <Workspace>
          <DocumentTab>&lt;Sans titre&gt; [Modifié] (93.6%)</DocumentTab>
          <Unit>mm</Unit>
          <HorizontalRuler />
          <VerticalRuler />
          <Canvas>
            <Scene />
            <TransformPanel />
            <InfoPanel />
          </Canvas>
        </Workspace>
      </Body>
    </Window>
  );
}
